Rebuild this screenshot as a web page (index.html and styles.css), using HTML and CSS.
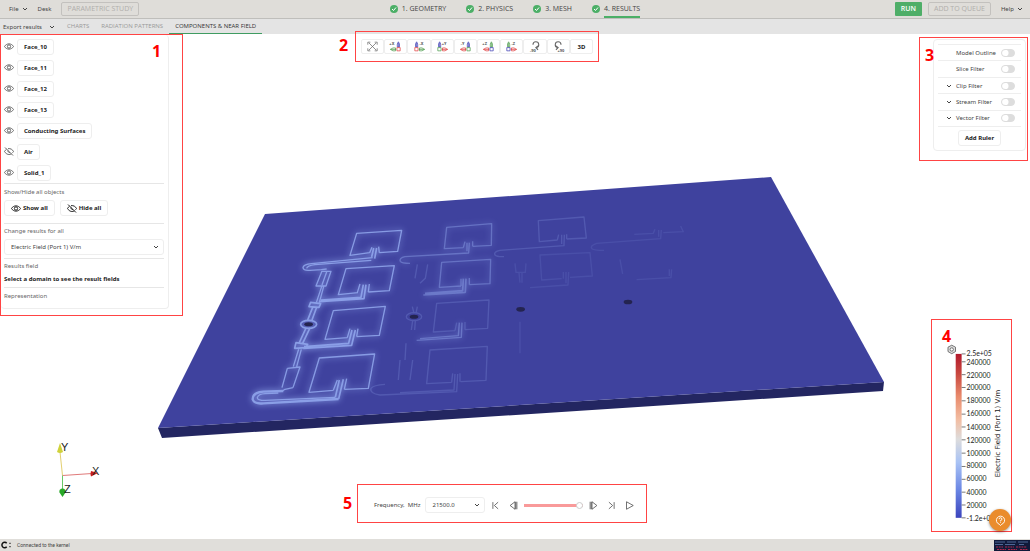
FILE: index.html
```html
<!DOCTYPE html>
<html lang="en">
<head>
<meta charset="utf-8">
<title>Components &amp; Near Field</title>
<link rel="stylesheet" href="styles.css">
</head>
<body>
<svg width="0" height="0" class="sprite" aria-hidden="true">
  <symbol id="eye" viewBox="0 0 20 14"><path d="M1 7C5 0 15 0 19 7C15 14 5 14 1 7Z"/><circle cx="10" cy="7" r="3.3"/></symbol>
  <symbol id="eye-off" viewBox="0 0 20 18"><path d="M5 4.500C3.500 5.500 2 7 1 9C5 16 12 16 15 13.500M8 3.300C13 2.500 17 5 19 9L17 11.500M8 7A3.300 3.300 0 0 0 12 11M2 1L18 17"/></symbol>
  <symbol id="down" viewBox="0 0 12 8"><path d="M2 2L6 6L10 2"/></symbol>
  <symbol id="check" viewBox="0 0 16 16"><circle cx="8" cy="8" r="8" fill="#4caf67" stroke="none"/><path d="M4 8L7 11L12 5" stroke="#fff" stroke-width="2"/></symbol>
</svg>

<header class="topbar">
  <nav class="menu">
    <button class="plain">File <svg class="chev"><use href="#down"/></svg></button>
    <button class="plain">Desk</button>
    <button class="ghost" disabled>PARAMETRIC STUDY</button>
  </nav>
  <nav class="steps">
    <a href="#"><svg><use href="#check"/></svg><span>1. GEOMETRY</span></a>
    <a href="#"><svg><use href="#check"/></svg><span>2. PHYSICS</span></a>
    <a href="#"><svg><use href="#check"/></svg><span>3. MESH</span></a>
    <a href="#"><svg><use href="#check"/></svg><span class="current">4. RESULTS</span></a>
  </nav>
  <div class="actions">
    <button class="run">RUN</button>
    <button class="ghost" disabled>ADD TO QUEUE</button>
    <button class="plain">Help <svg class="chev"><use href="#down"/></svg></button>
  </div>
</header>

<nav class="subbar">
  <button class="export">Export results <svg class="chev"><use href="#down"/></svg></button>
  <a href="#">CHARTS</a>
  <a href="#">RADIATION PATTERNS</a>
  <a href="#" class="active">COMPONENTS &amp; NEAR FIELD</a>
</nav>

<main class="viewport">
  <svg class="scene" viewBox="0 34 1030 505" role="img" aria-label="Near field on the antenna array board">
    <defs>
      <filter id="glow" x="-20%" y="-20%" width="140%" height="140%"><feGaussianBlur stdDeviation="10"/></filter>
      <filter id="soft" x="-5%" y="-5%" width="110%" height="110%"><feGaussianBlur stdDeviation="1.6"/></filter>
      <g id="col1">
        <path d="M659 248L600 256L620 190L755 181L743 244L688 248M666 232L659 248M686 230L688 248"/>
        <path d="M671 234L665 261M680 234L674 266" class="w"/>
        <path d="M668 263L485 281Q460 283 459 293Q461 303 480 301L514 299L530 297"/>
        <path d="M664 271L495 284Q472 287 470 295"/>
        <path d="M516 303L498 348H528L543 304H516M530 306L516 345M515 350L499 398M521 350L508 398"/>
        <path d="M624 368L565 374L588 296L733 287L718 362L655 366M630 342L622 368M658 342L655 366"/>
        <path d="M640 344L633 382L512 390M648 344L642 386L508 395" class="w"/>
        <path d="M482 397L512 401L507 412L477 410ZM488 412L473 450M500 412L486 450" class="w"/>
        <ellipse cx="476" cy="463" rx="24" ry="12" class="w"/>
        <path d="M480 474L458 520M468 474L447 520M438 518L473 523L468 533L434 535Z" class="w"/>
        <path d="M592 503L525 508L550 422L706 409L688 496L620 500M600 476L592 503M624 476L620 500"/>
        <path d="M606 480L596 520L462 530M616 480L605 526L460 535" class="w"/>
        <path d="M446 538L430 590M454 538L440 590M412 595L450 591L429 653M412 595L396 653M429 653L405 658L396 664"/>
        <path d="M550 661L477 667L508 564L674 552L655 655L583 658M562 630L550 661M590 626L583 658"/>
        <path d="M568 630L556 682M580 628L566 687" class="w"/>
        <path d="M566 687L340 700Q312 703 308 688Q308 667 340 665L400 663" class="x"/>
        <path d="M556 682L345 691Q322 691 322 683Q325 672 345 671L385 669"/>
      </g>
      <g id="col2">
        <path d="M190 143L133 146L140 82L275 71L274 136L218 139M195 125L190 143M218 124V139"/>
        <path d="M183 258L118 262L125 187L272 178L270 251L208 254M183 236V258M208 234V254"/>
        <path d="M201 128V154M208 128L206 159L15 170Q-3 174 1 184Q5 190 30 190" />
        <path d="M190 236L188 272L75 280M198 236L196 277L70 285" class="w"/>
        <path d="M178 368L175 407L60 416M186 368L184 412L50 421"/>
      </g>
      <g id="col2dim">
        <path d="M165 392L100 396L110 310L267 300L263 385L195 389M170 368L165 392M195 366V389"/>
        <path d="M155 547L80 551L90 450L262 439L258 541L182 545M158 520L155 547M180 520V545"/>
        <path d="M165 522L162 570L0 578M173 522L170 575L-60 585Q-92 580 -87 565Q-80 555 -45 553"/>
        <path d="M52 193L45 235M83 193L76 235L60 250M37 320L42 340M52 320L48 340M34 390L38 362M44 390L46 362M18 430L15 480M38 480L30 540M0 480L-5 540"/>
        <ellipse cx="42" cy="350" rx="23" ry="12"/>
        <path d="M472 120L418 125L415 62L552 51L559 114L500 117M476 104L472 120M500 103V117"/>
        <path d="M485 104V132M493 104L492 137L300 151Q280 155 285 165Q290 171 312 170"/>
      </g>
      <g id="faint">
        <path d="M485 236L425 240L420 165L570 158L577 228L510 232M490 216V236"/>
        <path d="M498 216V250M506 216L504 255L390 263"/>
        <path d="M345 190L348 217H376L378 190M357 218L360 248M366 218V248M360 365V460M350 328H375"/>
        <path d="M776 90V110M784 90L782 116L590 130Q568 138 576 146Q582 151 612 151M703 103L760 100L765 88M790 98L850 95L842 78"/>
        <path d="M808 208V228M815 208L813 233L710 239M660 178L668 222"/>
      </g>
    </defs>
    <polygon points="158,428 884,382 883,391 162,438" fill="#232661"/>
    <polygon points="265,214 771,177 884,382 158,428" fill="#3f429e"/>
    <g class="field" transform="translate(150 170) scale(.3333)">
      <use href="#col1" filter="url(#glow)" class="halo"/>
      <use href="#col1" filter="url(#soft)" opacity=".8"/>
      <ellipse cx="476" cy="463" rx="13" ry="6" class="hole"/>
    </g>
    <g class="field" transform="translate(400 200) scale(.3333)">
      <use href="#col2" filter="url(#glow)" opacity=".5"/>
      <use href="#col2" filter="url(#soft)" opacity=".4"/>
      <use href="#col2dim" filter="url(#soft)" opacity=".22"/>
      <use href="#faint" filter="url(#soft)" opacity=".12"/>
      <ellipse cx="42" cy="350" rx="13" ry="6" class="hole"/>
      <ellipse cx="362" cy="328" rx="13" ry="7" class="hole"/>
      <ellipse cx="684" cy="306" rx="13" ry="7" class="hole"/>
    </g>
    <g class="triad">
      <path d="M62.500 475.500L60 452" stroke="#e3cf70"/>
      <path d="M62.500 475.500L92 473.500" stroke="#e07a7a"/>
      <path d="M62.500 475.500V489" stroke="#68c868"/>
      <path d="M60 443L63 452Q60 454 57 452Z" fill="#cfd23a"/>
      <path d="M98 473L91 476.500Q90 473.500 91 471Z" fill="#c81e1e"/>
      <path d="M62.500 497L59.500 492.500A3.200 3 0 1 1 65.500 492.500Z" fill="#28a828"/>
      <text x="61" y="451">Y</text><text x="92" y="475">X</text><text x="64" y="493">Z</text>
    </g>
  </svg>

  <section class="frame objects">
    <span class="mark">1</span>
    <div class="panel">
      <ul class="rows">
        <li><svg class="eye"><use href="#eye"/></svg><button class="btn">Face_10</button></li>
        <li><svg class="eye"><use href="#eye"/></svg><button class="btn">Face_11</button></li>
        <li><svg class="eye"><use href="#eye"/></svg><button class="btn">Face_12</button></li>
        <li><svg class="eye"><use href="#eye"/></svg><button class="btn">Face_13</button></li>
        <li><svg class="eye"><use href="#eye"/></svg><button class="btn">Conducting Surfaces</button></li>
        <li><svg class="eye off"><use href="#eye-off"/></svg><button class="btn">Air</button></li>
        <li><svg class="eye"><use href="#eye"/></svg><button class="btn">Solid_1</button></li>
      </ul>
      <div class="group">
        <p>Show/Hide all objects</p>
        <div class="pair">
          <button class="btn"><svg class="eye"><use href="#eye"/></svg>Show all</button>
          <button class="btn"><svg class="eye off"><use href="#eye-off"/></svg>Hide all</button>
        </div>
      </div>
      <div class="group tight">
        <label for="result">Change results for all</label>
        <div class="pick"><select id="result"><option>Electric Field (Port 1) V/m</option></select><svg class="chev"><use href="#down"/></svg></div>
      </div>
      <div class="group tight">
        <p>Results field</p>
        <strong>Select a domain to see the result fields</strong>
      </div>
      <div class="group last"><p>Representation</p></div>
    </div>
  </section>

  <section class="frame views">
    <span class="mark">2</span>
    <button aria-label="Fit"><svg viewBox="0 0 36 30"><g stroke="#666" stroke-width="2"><path d="M8 5L28 25M28 5L8 25M5 10V3H12M24 3H31V10M31 20V27H24M12 27H5V20"/></g></svg></button>
    <button aria-label="+X"><svg viewBox="0 0 36 30"><text x="1" y="12">+X</text><g stroke="#3c3cb4"><path d="M26 16V5M23 8L26 2L29 8V16H23Z"/></g><g stroke="#4a9a4a"><path d="M20 23H4M11 19L4 23L11 27H18V19Z"/></g><path d="M22 18H31V27H22Z" stroke="#e04040"/></svg></button>
    <button aria-label="-X"><svg viewBox="0 0 36 30"><text x="18" y="12">-X</text><g stroke="#3c3cb4"><path d="M10 16V5M7 8L10 2L13 8V16H7Z"/></g><g stroke="#4a9a4a"><path d="M16 23H32M25 19L32 23L25 27H18V19Z"/></g><path d="M5 18H14V27H5Z" stroke="#e04040"/></svg></button>
    <button aria-label="+Y"><svg viewBox="0 0 36 30"><text x="16" y="12">+Y</text><g stroke="#3c3cb4"><path d="M10 16V5M7 8L10 2L13 8V16H7Z"/></g><g stroke="#e04040"><path d="M16 23H32M25 19L32 23L25 27H18V19Z"/></g><path d="M5 18H14V27H5Z" stroke="#4a9a4a"/></svg></button>
    <button aria-label="-Y"><svg viewBox="0 0 36 30"><text x="5" y="12">-Y</text><g stroke="#3c3cb4"><path d="M26 16V5M23 8L26 2L29 8V16H23Z"/></g><g stroke="#e04040"><path d="M20 23H4M11 19L4 23L11 27H18V19Z"/></g><path d="M22 18H31V27H22Z" stroke="#4a9a4a"/></svg></button>
    <button aria-label="+Z"><svg viewBox="0 0 36 30"><text x="1" y="12">+Z</text><g stroke="#4a9a4a"><path d="M26 16V5M23 8L26 2L29 8V16H23Z"/></g><g stroke="#e04040"><path d="M20 23H4M11 19L4 23L11 27H18V19Z"/></g><path d="M22 18H31V27H22Z" stroke="#3c3cb4"/></svg></button>
    <button aria-label="-Z"><svg viewBox="0 0 36 30"><text x="18" y="12">-Z</text><g stroke="#4a9a4a"><path d="M10 16V5M7 8L10 2L13 8V16H7Z"/></g><g stroke="#e04040"><path d="M16 23H32M25 19L32 23L25 27H18V19Z"/></g><path d="M5 18H14V27H5Z" stroke="#3c3cb4"/></svg></button>
    <button aria-label="Rotate left"><svg viewBox="0 0 36 30"><path d="M11 10A8 8 0 1 1 20 18M26 13L19 18L25 24" stroke="#666" stroke-width="3"/><text x="3" y="29">-90</text></svg></button>
    <button aria-label="Rotate right"><svg viewBox="0 0 36 30"><path d="M25 10A8 8 0 1 0 16 18M10 13L17 18L11 24" stroke="#666" stroke-width="3"/><text x="15" y="29">+90</text></svg></button>
    <button class="text">3D</button>
  </section>

  <section class="frame filters">
    <span class="mark">3</span>
    <div class="panel">
      <div class="list">
        <label><i></i><span>Model Outline</span><input type="checkbox"></label>
        <label><i></i><span>Slice Filter</span><input type="checkbox"></label>
        <label><svg class="chev"><use href="#down"/></svg><span>Clip Filter</span><input type="checkbox"></label>
        <label><svg class="chev"><use href="#down"/></svg><span>Stream Filter</span><input type="checkbox"></label>
        <label><svg class="chev"><use href="#down"/></svg><span>Vector Filter</span><input type="checkbox"></label>
      </div>
      <button class="btn">Add Ruler</button>
    </div>
  </section>

  <section class="frame legend">
    <span class="mark">4</span>
    <svg viewBox="931 320 80 211">
      <defs><linearGradient id="coolwarm" x1="0" y1="0" x2="0" y2="1">
        <stop offset="0" stop-color="#b2182b"/><stop offset=".12" stop-color="#c8473f"/><stop offset=".26" stop-color="#e98b6c"/><stop offset=".4" stop-color="#f2bda2"/><stop offset=".52" stop-color="#dddcdc"/><stop offset=".66" stop-color="#a9c3f5"/><stop offset=".83" stop-color="#6a86e4"/><stop offset="1" stop-color="#3b44bd"/>
      </linearGradient></defs>
      <g stroke="#555" stroke-width=".8"><path d="M951 344.200L954.800 346.200V350.600L951 352.800L947.200 350.600V346.200Z" fill="#ddd"/><circle cx="951" cy="348.500" r="1.700" fill="#fff"/></g>
      <rect x="955" y="353" width="6" height="166" fill="url(#coolwarm)" stroke="none"/>
      <path d="M961 353h4M961 361h4M961 374h4M961 387h4M961 400.500h4M961 414h4M961 427h4M961 440h4M961 453.500h4M961 467h4M961 480h4M961 493h4M961 506h4M961 519h4" stroke="#777" stroke-width="1"/>
      <g class="ticks">
        <text x="966" y="355">2.5e+05</text><text x="966" y="364">240000</text><text x="966" y="377">220000</text><text x="966" y="390">200000</text><text x="966" y="403">180000</text><text x="966" y="416">160000</text><text x="966" y="430">140000</text><text x="966" y="443">120000</text><text x="966" y="456">100000</text><text x="966" y="469">80000</text><text x="966" y="482">60000</text><text x="966" y="496">40000</text><text x="966" y="509">20000</text><text x="966" y="522">-1.2e+05</text>
      </g>
      <text class="axis" transform="translate(1000 478) rotate(-90)">Electric Field (Port 1) V/m</text>
    </svg>
  </section>

  <section class="frame player">
    <span class="mark">5</span>
    <label for="freq">Frequency,&nbsp; MHz</label>
    <div class="pick"><select id="freq"><option>21500.0</option></select><svg class="chev"><use href="#down"/></svg></div>
    <button aria-label="First"><svg viewBox="0 0 24 24"><path d="M5 3V21M19 3L9 12L19 21"/></svg></button>
    <button aria-label="Previous"><svg viewBox="0 0 24 24"><path d="M16 2L3 12L16 22ZM21 2V22M18 2V22"/></svg></button>
    <input type="range" aria-label="Frequency" value="100">
    <button aria-label="Next"><svg viewBox="0 0 24 24"><path d="M8 2L21 12L8 22ZM3 2V22M6 2V22"/></svg></button>
    <button aria-label="Last"><svg viewBox="0 0 24 24"><path d="M19 3V21M5 3L15 12L5 21"/></svg></button>
    <button aria-label="Play"><svg viewBox="0 0 24 24"><path d="M4 2L22 12L4 22Z"/></svg></button>
  </section>

  <button class="help" aria-label="Support"><svg viewBox="0 0 24 24"><path d="M12 23L9 20A9 9 0 1 1 15 20ZM9 9A3 3 0 1 1 12 12V14M12 16V17.500"/></svg></button>
</main>

<footer class="status">
  <svg class="brand" viewBox="0 0 36 24"><path d="M20 7A8 8 0 1 0 20 17" stroke="#111" stroke-width="4.500"/><path d="M28 5h4v4h-4zM28 15h4v4h-4z" fill="#333" stroke="none"/></svg>
  <span>Connected to the kernel</span>
  <svg class="thumb" viewBox="0 0 36 11"><rect width="36" height="11" fill="#101a3a" stroke="none"/><path d="M1 2H11M13 2H22M24 2H34M1 4.500H9M11 4.500H21M25 4.500H30" stroke="#4c6796"/><path d="M2 7H9M11 7H20M22 7H33M3 9.500H12M14 9.500H23M26 9.500H34" stroke="#b02a4c" stroke-dasharray="2 .7"/></svg>
</footer>
</body>
</html>
```
FILE: styles.css
```css
* { box-sizing: border-box; }
body {
  margin: 0;
  height: 100vh;
  display: flex;
  flex-direction: column;
  overflow: hidden;
  background: #fff;
  color: #444;
  font: 6px/10px "Noto Sans", "Open Sans", sans-serif;
}
button, select, input { font: inherit; color: inherit; margin: 0; }
button { padding: 0; border: 0; background: none; white-space: nowrap; }
a { color: inherit; text-decoration: none; white-space: nowrap; }
p, ul { margin: 0; padding: 0; list-style: none; }
svg { display: block; fill: none; stroke: currentColor; flex: none; overflow: visible; }
text { stroke: none; fill: #222; }
polygon { stroke: none; }
.sprite { position: absolute; }
.chev { width: 6px; height: 4px; stroke-width: 2; }
.eye { width: 10px; height: 7px; stroke-width: 2; }
.eye.off { height: 9px; }

/* Top bar */
.topbar {
  height: 19px;
  flex: none;
  display: grid;
  grid-template-columns: 1fr auto 1fr;
  align-items: center;
  background: #dfddd9;
  border-bottom: 1px solid #bfbebb;
}
.menu, .actions { display: flex; align-items: center; gap: 6px; }
.menu { padding-left: 9px; gap: 10px; }
.actions { justify-content: flex-end; padding-right: 7px; }
.plain { display: flex; align-items: center; gap: 3px; }
.actions .plain { margin-left: 4px; }
.ghost, .run, .steps { font: 7px/12px "Open Sans", sans-serif; }
.ghost {
  height: 14px;
  padding: 0 5px;
  border: 1px solid #c3c1be;
  border-radius: 2px;
  color: #b0aeab;
}
.run {
  height: 14px;
  padding: 0 6px;
  border-radius: 1px;
  background: #4fae68;
  color: #fff;
  font-weight: 600;
}
.steps { display: flex; align-self: stretch; gap: 20px; }
.steps a { display: flex; align-items: center; gap: 4px; }
.steps svg { width: 8px; height: 8px; }
.steps span { height: 18px; line-height: 18px; border-bottom: 2px solid transparent; }
.steps .current { border-color: #4caf67; }

/* Tab bar */
.subbar {
  height: 15px;
  flex: none;
  display: flex;
  align-items: stretch;
  background: #e4e4e4;
  color: #999;
  line-height: 14px;
}
.subbar a { padding: 0 6px; border-bottom: 1px solid transparent; font-family: "Open Sans", sans-serif; }
.subbar .active { color: #333; border-color: #3f9c62; }
.export { display: flex; align-items: center; gap: 7px; padding: 0 6px 0 3px; color: #444; }

/* Viewport and floating panels */
.viewport { position: relative; flex: 1; min-height: 0; }
.scene { width: 100%; height: 100%; }
.field { stroke: #96adf2; stroke-width: 4; stroke-linejoin: round; }
#col1 .w, #col2 .w { stroke-width: 5; }
#col1 .x { stroke-width: 7; }
.halo { opacity: .9; }
.hole { fill: #242450; stroke: none; }
.triad { stroke-width: 1; }
.triad path[fill] { stroke: none; }
.triad text { font: 11px "Liberation Sans", sans-serif; }

.frame { position: absolute; border: 1px solid #f44; }
.mark {
  position: absolute;
  color: #f00;
  font-size: 16px;
  line-height: 16px;
  font-weight: 700;
}
.panel { border: 1px solid #eee; border-radius: 4px; }
.btn {
  height: 16px;
  padding: 0 6px;
  border: 1px solid #eee;
  border-radius: 3px;
  color: #222;
  font-weight: 700;
  display: inline-flex;
  align-items: center;
  gap: 2px;
}
.pick {
  position: relative;
  height: 16px;
  border: 1px solid #eee;
  border-radius: 3px;
}
.pick select {
  display: block;
  width: 100%;
  height: 100%;
  padding: 0 6px;
  border: 0;
  background: none;
  appearance: none;
}
.pick .chev { position: absolute; right: 4px; top: 5px; }

.objects { left: 0; top: 0; width: 183px; height: 282px; }
.objects .mark { left: 151px; top: 8px; }
.objects .panel { width: 168px; border-width: 0 1px 1px 0; padding: 1px 4px 0 3px; }
.rows li { display: flex; align-items: center; height: 21px; gap: 3px; }
.rows .eye { color: #666; }
.group { border-top: 1px solid #e6e6e6; padding-bottom: 7px; }
.group p, .group label { display: block; height: 16px; line-height: 16px; color: #666; }
.group strong { display: block; color: #222; }
.tight { padding-bottom: 3px; }
.tight p, .tight label { height: 15px; line-height: 15px; }
.last { padding-bottom: 4px; }
.pair { display: flex; gap: 5px; }

.views { left: 355px; top: -3px; width: 244px; height: 31px; display: flex; padding: 7px 5px; }
.views .mark { left: -17px; top: 5px; }
.views button {
  flex: 1;
  display: grid;
  place-items: center;
  border: 1px solid #eee;
  border-radius: 2px;
}
.views svg { width: 13px; height: 11px; stroke-width: 2; }
.views svg text { font: 700 11px "Noto Sans", sans-serif; fill: #555; }
.views .text { color: #222; font-weight: 700; }

.filters { right: 2px; top: 3px; width: 109px; height: 124px; padding: 1px 1px 0 13px; }
.filters .mark { left: 5px; top: 9px; }
.filters .panel { padding: 4px 4px; text-align: center; }
.list { display: flex; flex-direction: column; height: 83px; margin-bottom: 3px; text-align: left; border-top: 1px solid #eee; }
.list label { flex: 1; display: grid; grid-template-columns: 10px 1fr auto; align-items: center; padding: 0 6px 0 8px; border-bottom: 1px solid #eee; white-space: nowrap; }
.list input {
  appearance: none;
  width: 14px;
  height: 8px;
  border-radius: 4px;
  background: radial-gradient(circle at 3px 3px, #fff 3px, transparent 4px), #ddd;
  border: 1px solid #ddd;
}

.legend { right: 18px; bottom: 7px; width: 81px; height: 213px; }
.legend .mark { left: 10px; top: 8px; }
.legend > svg { width: 100%; height: 100%; }
.ticks text { font: 7px Lato, sans-serif; }
.axis { font: 7px "DejaVu Sans", sans-serif; }

.player {
  left: 357px;
  bottom: 16px;
  width: 290px;
  height: 39px;
  display: flex;
  align-items: center;
  gap: 9px;
  padding: 3px 12px 0 16px;
  white-space: nowrap;
}
.player .mark { left: -15px; top: 10px; }
.player label { margin-right: -4px; }
.player .pick { width: 60px; margin-right: -3px; }
.player button svg { width: 9px; height: 9px; stroke-width: 2; }
.player input {
  appearance: none;
  flex: 1;
  min-width: 0;
  height: 9px;
  margin: 0 -3px;
  background: linear-gradient(#f99a9a, #f99a9a) center / 100% 3px no-repeat;
}
.player input::-webkit-slider-thumb {
  appearance: none;
  width: 7px;
  height: 7px;
  border: 1px solid #ccc;
  border-radius: 50%;
  background: #fff;
}
.help {
  position: absolute;
  right: 19px;
  bottom: 8px;
  width: 22px;
  height: 22px;
  display: grid;
  place-items: center;
  border-radius: 50%;
  background: #ea8c2c;
  color: #fff;
  box-shadow: 0 1px 3px #0006;
}
.help svg { width: 11px; height: 11px; stroke-width: 2; }

/* Status bar */
.status {
  height: 12px;
  flex: none;
  display: flex;
  align-items: center;
  gap: 5px;
  background: #e0deda;
  font-family: Roboto, sans-serif;
  font-size: 5px;
}
.brand { width: 12px; height: 8px; }
.thumb { width: 36px; height: 11px; margin-left: auto; align-self: flex-end; }
```
